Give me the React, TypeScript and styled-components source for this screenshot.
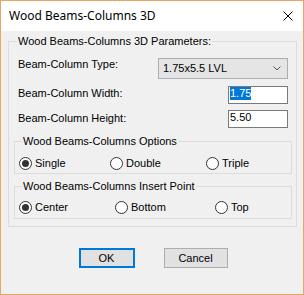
import React from "react";
import styled, { createGlobalStyle } from "styled-components";

const Global = createGlobalStyle`
  html, body { margin: 0; padding: 0; background: #f0f0f0; }
  * { box-sizing: border-box; }
`;

const Window = styled.div`
  width: 304px;
  height: 295px;
  border: 1px solid #e6a762;
  background: #f0f0f0;
  display: flex;
  flex-direction: column;
  font-family: "Liberation Sans", Arial, sans-serif;
  font-size: 11px;
  line-height: 13px;
  color: #000;
`;

const TitleBar = styled.div`
  height: 30px;
  flex: none;
  background: #fff;
  display: flex;
  align-items: center;
  justify-content: space-between;
  padding: 0 10px 0 8px;
`;

const Title = styled.span`
  font-family: "Noto Sans", "Open Sans", sans-serif;
  font-size: 12px;
  line-height: 16px;
  color: #000;
`;

const Body = styled.div`
  padding: 4px 6px 0 7px;
  display: flex;
  flex-direction: column;
`;

const Group = styled.fieldset<{ $pad: string; $mt?: number }>`
  margin: ${(p) => p.$mt ?? 0}px 0 0 0;
  padding: ${(p) => p.$pad};
  border: 1px solid #dcdcdc;
  min-width: 0;
`;

const Legend = styled.legend<{ $indent: number }>`
  margin-left: ${(p) => p.$indent}px;
  padding: 0 1px;
  line-height: 13px;
  font-size: 11px;
`;

const FieldRow = styled.div<{ $h: number; $mt?: number }>`
  display: flex;
  justify-content: space-between;
  align-items: flex-start;
  height: ${(p) => p.$h}px;
  margin-top: ${(p) => p.$mt ?? 0}px;
  padding: 0 4px;
`;

const Label = styled.span<{ $top?: number }>`
  padding-top: ${(p) => p.$top ?? 0}px;
  white-space: nowrap;
`;

const Combo = styled.div`
  width: 130px;
  height: 21px;
  border: 1px solid #adadad;
  background: #e5e5e5;
  display: flex;
  align-items: center;
  justify-content: space-between;
  padding: 0 6px 0 4px;
`;

const TextBox = styled.div`
  width: 60px;
  height: 18px;
  border: 1px solid #7a7a7a;
  background: #fff;
  padding: 0 0 0 1px;
  line-height: 13px;
`;

const Selected = styled.span`
  background: #0078d7;
  color: #fff;
  display: inline-block;
  line-height: 13px;
`;

const RadioRow = styled.div<{ $cols: string }>`
  display: grid;
  grid-template-columns: ${(p) => p.$cols};
  height: 13px;
  padding-left: 4px;
`;

const RadioItem = styled.label`
  display: flex;
  align-items: center;
  gap: 3px;
  white-space: nowrap;
`;

const Circle = styled.span<{ $checked?: boolean }>`
  width: 13px;
  height: 13px;
  border-radius: 50%;
  border: 1px solid #333;
  background: #fff;
  display: flex;
  align-items: center;
  justify-content: center;
  flex: none;
  &::after {
    content: "";
    width: 7px;
    height: 7px;
    border-radius: 50%;
    background: #333;
    display: ${(p) => (p.$checked ? "block" : "none")};
  }
`;

const ButtonRow = styled.div`
  display: flex;
  justify-content: center;
  gap: 29px;
  margin-top: 21px;
  padding-left: 1px;
`;

const Button = styled.button<{ $default?: boolean; $w: number }>`
  width: ${(p) => p.$w}px;
  height: 20px;
  background: #e1e1e1;
  border: ${(p) => (p.$default ? "2px solid #0078d7" : "1px solid #adadad")};
  font-family: "Liberation Sans", Arial, sans-serif;
  font-size: 11px;
  color: #000;
  padding: 0;
  margin: 0;
  line-height: 13px;
`;

function Radio({ label, checked }: { label: string; checked?: boolean }) {
  return (
    <RadioItem>
      <Circle $checked={checked} />
      <span>{label}</span>
    </RadioItem>
  );
}

export default function App() {
  return (
    <>
      <Global />
      <Window>
        <TitleBar>
          <Title>Wood Beams-Columns 3D</Title>
          <svg width="10" height="10" viewBox="0 0 10 10">
            <path d="M0.5 0.5 L9.5 9.5 M9.5 0.5 L0.5 9.5" stroke="#000" strokeWidth="1" />
          </svg>
        </TitleBar>
        <Body>
          <Group $pad="10px 4px 7px 5px" style={{ width: 289 }}>
            <Legend $indent={3}>Wood Beams-Columns 3D Parameters:</Legend>
            <FieldRow $h={21}>
              <Label>Beam-Column Type:</Label>
              <Combo>
                <span>1.75x5.5 LVL</span>
                <svg width="8" height="5" viewBox="0 0 8 5">
                  <path d="M0.5 0.5 L4 4 L7.5 0.5" stroke="#555" strokeWidth="1" fill="none" />
                </svg>
              </Combo>
            </FieldRow>
            <FieldRow $h={18} $mt={7}>
              <Label $top={1}>Beam-Column Width:</Label>
              <TextBox>
                <Selected>1.75</Selected>
              </TextBox>
            </FieldRow>
            <FieldRow $h={18} $mt={6}>
              <Label $top={2}>Beam-Column Height:</Label>
              <TextBox>
                <span>5.50</span>
              </TextBox>
            </FieldRow>
            <Group $pad="9px 0 3px 0" $mt={7}>
              <Legend $indent={7}>Wood Beams-Columns Options</Legend>
              <RadioRow $cols="91px 96px auto">
                <Radio label="Single" checked />
                <Radio label="Double" />
                <Radio label="Triple" />
              </RadioRow>
            </Group>
            <Group $pad="8px 0 4px 0" $mt={6}>
              <Legend $indent={7}>Wood Beams-Columns Insert Point</Legend>
              <RadioRow $cols="96px 100px auto">
                <Radio label="Center" checked />
                <Radio label="Bottom" />
                <Radio label="Top" />
              </RadioRow>
            </Group>
          </Group>
          <ButtonRow>
            <Button $default $w={56}>OK</Button>
            <Button $w={64}>Cancel</Button>
          </ButtonRow>
        </Body>
      </Window>
    </>
  );
}
